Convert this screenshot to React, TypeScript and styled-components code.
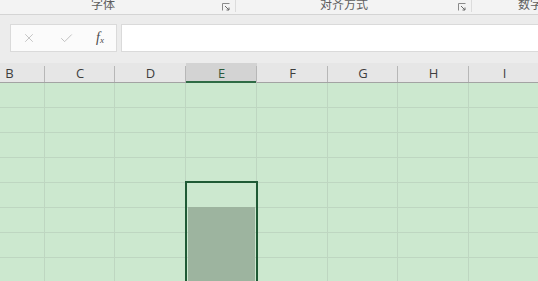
import React from "react";
import styled, { createGlobalStyle } from "styled-components";
import { X, Check } from "lucide-react";

const GlobalStyle = createGlobalStyle`
  html, body {
    margin: 0;
    padding: 0;
    background: #cce8cf;
    overflow: hidden;
  }
  body {
    font-family: "Open Sans", "Noto Sans", "Noto Sans CJK SC", sans-serif;
  }
`;

const COLUMNS = [
  { name: "B", width: 71 },
  { name: "C", width: 70 },
  { name: "D", width: 71 },
  { name: "E", width: 71 },
  { name: "F", width: 71 },
  { name: "G", width: 70 },
  { name: "H", width: 71 },
  { name: "I", width: 71 }
];

const ROW_COUNT = 8;
const template = COLUMNS.map(c => `${c.width}px`).join(" ");

export default function App() {
  return (
    <>
      <GlobalStyle />
      <Page>
        <Ribbon>
          <RibbonGroup width={245} offset={-10}>
            <GroupLabel>字体</GroupLabel>
            <Launcher />
          </RibbonGroup>
          <RibbonGroup width={235}>
            <GroupLabel>对齐方式</GroupLabel>
            <Launcher />
          </RibbonGroup>
          <RibbonGroup width={116}>
            <GroupLabel>数字</GroupLabel>
          </RibbonGroup>
        </Ribbon>

        <FormulaBar>
          <ActionBox>
            <ActionButton>
              <X size={14} strokeWidth={1.4} color="#b9b9b9" />
            </ActionButton>
            <ActionButton>
              <Check size={15} strokeWidth={1.4} color="#b9b9b9" />
            </ActionButton>
            <Fx>
              f<sub>x</sub>
            </Fx>
          </ActionBox>
          <FormulaInput />
        </FormulaBar>

        <Sheet>
          <HeaderRow>
            {COLUMNS.map(c => (
              <ColumnHeader key={c.name} selected={c.name === "E"}>
                {c.name}
              </ColumnHeader>
            ))}
          </HeaderRow>
          <Body>
            {Array.from({ length: ROW_COUNT }).map((_, r) => (
              <Row key={r}>
                {COLUMNS.map(c => (
                  <Cell key={c.name} />
                ))}
              </Row>
            ))}
            <Selection>
              <ActiveCell />
              <RangeFill />
            </Selection>
          </Body>
        </Sheet>
      </Page>
    </>
  );
}

function Launcher() {
  return (
    <LauncherSlot>
      <svg width="8" height="8" viewBox="0 0 8 8">
        <path d="M0.5 7.5V0.5h7" fill="none" stroke="#8a8a8a" strokeWidth="1" />
        <path d="M3 3l4 4M7 4.5V7H4.5" fill="none" stroke="#6a6a6a" strokeWidth="1" />
      </svg>
    </LauncherSlot>
  );
}

const Page = styled.div`
  width: 538px;
  height: 281px;
  overflow: hidden;
  display: flex;
  flex-direction: column;
`;

const Ribbon = styled.div`
  height: 14px;
  flex: none;
  display: flex;
  background: #f3f3f3;
  border-bottom: 1px solid #d4d4d4;
  overflow: hidden;
`;

const RibbonGroup = styled.div<{ width: number; offset?: number }>`
  flex: none;
  width: ${({ width }) => width}px;
  margin-left: ${({ offset }) => offset || 0}px;
  display: flex;
  border-right: 1px solid #dcdcdc;
  height: 12px;
`;

const GroupLabel = styled.div`
  flex: 1;
  text-align: center;
  font-family: "Noto Sans CJK SC", sans-serif;
  font-size: 12px;
  line-height: 12px;
  margin-top: -2px;
  color: #5e5e5e;
`;

const LauncherSlot = styled.div`
  width: 19px;
  display: flex;
  justify-content: center;
  align-items: flex-start;
  padding-top: 3px;
`;

const FormulaBar = styled.div`
  height: 48px;
  flex: none;
  display: flex;
  align-items: flex-start;
  gap: 4px;
  padding: 9px 0 0 10px;
  box-sizing: border-box;
  background: #ececec;
`;

const ActionBox = styled.div`
  width: 107px;
  height: 28px;
  box-sizing: border-box;
  background: #fbfbfb;
  border: 1px solid #dadada;
  display: flex;
  align-items: center;
  padding-left: 11px;
`;

const ActionButton = styled.div`
  width: 37px;
  display: flex;
  align-items: center;
`;

const Fx = styled.div`
  font-family: "Liberation Serif", serif;
  font-style: italic;
  font-size: 14px;
  color: #4a4a4a;

  sub {
    font-size: 9px;
    vertical-align: -1px;
  }
`;

const FormulaInput = styled.div`
  flex: 1;
  height: 28px;
  box-sizing: border-box;
  background: #ffffff;
  border: 1px solid #dadada;
  border-right: none;
`;

const Sheet = styled.div`
  flex: 1;
  display: flex;
  flex-direction: column;
  margin-left: -26px;
`;

const HeaderRow = styled.div`
  height: 20px;
  flex: none;
  display: grid;
  grid-template-columns: ${template};
  background: #e6e6e6;
  border-bottom: 1px solid #a3a3a3;
  box-sizing: border-box;
`;

const ColumnHeader = styled.div<{ selected?: boolean }>`
  position: relative;
  display: flex;
  justify-content: center;
  align-items: center;
  font-size: 13px;
  color: ${({ selected }) => (selected ? "#2d5a3c" : "#3e3e3e")};
  background: ${({ selected }) => (selected ? "#d3d3d3" : "transparent")};
  box-shadow: ${({ selected }) => (selected ? "inset 0 -2px 0 #2f6b45" : "none")};
  margin-bottom: ${({ selected }) => (selected ? "-1px" : "0")};

  &::after {
    content: "";
    position: absolute;
    right: 0;
    top: 3px;
    bottom: 0;
    width: 1px;
    background: #b7b7b7;
  }
`;

const Body = styled.div`
  position: relative;
  flex: 1;
`;

const Row = styled.div`
  display: grid;
  grid-template-columns: ${template};
  height: 25px;
`;

const Cell = styled.div`
  border-right: 1px solid #bed6c1;
  border-bottom: 1px solid #bed6c1;
  background: #cce8cf;
`;

const Selection = styled.div`
  position: absolute;
  left: ${71 + 70 + 71 - 1}px;
  top: 98px;
  width: 73px;
  height: 140px;
  box-sizing: border-box;
  border: 2px solid #1f5a35;
  padding: 1px;
  display: flex;
  flex-direction: column;
`;

const ActiveCell = styled.div`
  height: 23px;
  flex: none;
  background: #cce8cf;
`;

const RangeFill = styled.div`
  flex: 1;
  background: #9db49f;
`;
